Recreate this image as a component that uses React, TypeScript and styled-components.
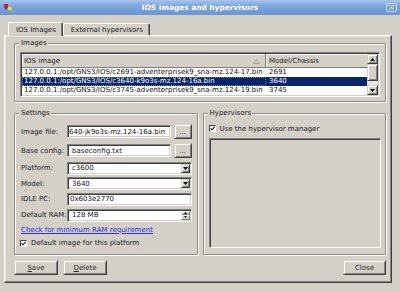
import React from "react";
import styled, { createGlobalStyle } from "styled-components";

const Face = "#d4d0c8";
const Shadow = "#808080";
const DarkShadow = "#404040";
const Highlight = "#ffffff";

const GlobalStyle = createGlobalStyle`
  html, body {
    margin: 0;
    padding: 0;
    background: ${Face};
  }

  body {
    font-family: "DejaVu Sans", Verdana, sans-serif;
    font-size: 7px;
    color: #1c1c1c;
  }

  * {
    box-sizing: border-box;
  }
`;

interface IImage {
  path: string;
  model: string;
  selected?: boolean;
}

const images: IImage[] = [
  { path: "127.0.0.1:/opt/GNS3/IOS/c2691-adventerprisek9_sna-mz.124-17.bin", model: "2691" },
  { path: "127.0.0.1:/opt/GNS3/IOS/c3640-k9o3s-mz.124-16a.bin", model: "3640", selected: true },
  { path: "127.0.0.1:/opt/GNS3/IOS/c3745-adventerprisek9_sna-mz.124-19.bin", model: "3745" },
  { path: "127.0.0.1:/opt/GNS3/IOS/c7200-adventerprisek9-mz.124-17.bin", model: "7200" },
];

const Check = () => (
  <svg width="5" height="5" viewBox="0 0 5 5">
    <path d="M0.5 2.3 L2 3.8 L4.6 0.8" fill="none" stroke="#111" strokeWidth="1.1" />
  </svg>
);

const Arrow = ({ up }: { up?: boolean }) => (
  <svg width="5" height="3" viewBox="0 0 5 3">
    <path d={up ? "M0 3 L2.5 0 L5 3 Z" : "M0 0 L5 0 L2.5 3 Z"} fill="#111" />
  </svg>
);

export default function App() {
  return (
    <>
      <GlobalStyle />
      <Window>
        <TitleBar>
          <svg width="10" height="9" viewBox="0 0 10 9">
            <rect x="1" y="1" width="4" height="4" fill="#d42020" />
            <rect x="2" y="4.5" width="2" height="2" fill="#2a3cc8" />
            <circle cx="6.8" cy="5.6" r="2" fill="#f2e21c" />
          </svg>
          <Title>IOS images and hypervisors</Title>
          <CloseBox>
            <svg width="5" height="5" viewBox="0 0 5 5">
              <path d="M0.5 0.5 L4.5 4.5 M4.5 0.5 L0.5 4.5" stroke="#fff" strokeWidth="1" />
            </svg>
          </CloseBox>
        </TitleBar>

        <Body>
          <TabBar>
            <Tab $active>IOS Images</Tab>
            <Tab>External hypervisors</Tab>
          </TabBar>

          <Pane>
            <Group>
              <GroupTitle>Images</GroupTitle>
              <Table>
                <List>
                  <HeaderRow>
                    <HeaderCell>
                      IOS image
                      <SortMark width="7" height="5" viewBox="0 0 7 5">
                        <path d="M0.5 4.5 L3.5 0.5 L6.5 4.5 Z" fill="none" stroke="#a4a19b" />
                      </SortMark>
                    </HeaderCell>
                    <HeaderCell>Model/Chassis</HeaderCell>
                  </HeaderRow>
                  {images.map((image) => (
                    <Row key={image.path} $selected={image.selected}>
                      <Cell $focus={image.selected}>{image.path}</Cell>
                      <Cell>{image.model}</Cell>
                    </Row>
                  ))}
                </List>
                <ScrollBar>
                  <ScrollButton>
                    <Arrow up />
                  </ScrollButton>
                  <Thumb />
                  <ScrollTrack />
                  <ScrollButton>
                    <Arrow />
                  </ScrollButton>
                </ScrollBar>
              </Table>
            </Group>

            <Columns>
              <Group>
                <GroupTitle>Settings</GroupTitle>
                <FormRow $height={19}>
                  <Label>Image file:</Label>
                  <Field $pad={1}>640-jk9o3s-mz.124-16a.bin</Field>
                  <SmallButton>...</SmallButton>
                </FormRow>
                <FormRow $height={19}>
                  <Label>Base config:</Label>
                  <Field>baseconfig.txt</Field>
                  <SmallButton>...</SmallButton>
                </FormRow>
                <FormRow $height={16}>
                  <Label>Platform:</Label>
                  <Field>
                    <FieldText>c3600</FieldText>
                    <DropButton>
                      <Arrow />
                    </DropButton>
                  </Field>
                </FormRow>
                <FormRow $height={15}>
                  <Label>Model:</Label>
                  <Field>
                    <FieldText>3640</FieldText>
                    <DropButton>
                      <Arrow />
                    </DropButton>
                  </Field>
                </FormRow>
                <FormRow $height={16}>
                  <Label>IDLE PC:</Label>
                  <Field $pad={2}>0x603e2770</Field>
                </FormRow>
                <FormRow $height={16}>
                  <Label>Default RAM:</Label>
                  <Field>
                    <FieldText>128 MB</FieldText>
                    <Spin>
                      <SpinHalf>
                        <Arrow up />
                      </SpinHalf>
                      <SpinHalf>
                        <Arrow />
                      </SpinHalf>
                    </Spin>
                  </Field>
                </FormRow>
                <FormRow $height={13}>
                  <Link>Check for minimum RAM requirement</Link>
                </FormRow>
                <FormRow $height={14}>
                  <CheckLine>
                    <CheckBox>
                      <Check />
                    </CheckBox>
                    Default image for this platform
                  </CheckLine>
                </FormRow>
              </Group>

              <HyperGroup>
                <GroupTitle>Hypervisors</GroupTitle>
                <CheckLine $height={15}>
                  <CheckBox>
                    <Check />
                  </CheckBox>
                  Use the hypervisor manager
                </CheckLine>
                <HyperList />
              </HyperGroup>
            </Columns>

            <ButtonRow>
              <PushButton>
                <u>S</u>ave
              </PushButton>
              <PushButton>
                <u>D</u>elete
              </PushButton>
              <PushButton $right>Close</PushButton>
            </ButtonRow>
          </Pane>
        </Body>
      </Window>
    </>
  );
}

const Window = styled.div`
  width: 400px;
  height: 292px;

  display: flex;
  flex-direction: column;

  overflow: hidden;

  background: ${Face};
`;

const TitleBar = styled.div`
  flex: none;
  height: 15px;

  display: grid;
  grid-template-columns: 1fr auto 1fr;
  align-items: center;

  padding: 0 3px 0 3px;

  background: linear-gradient(#a9c6ec, #7fa6dd 40%, #6c97d5);
  border-bottom: 1px solid #7096cc;
`;

const Title = styled.div`
  color: #ffffff;

  font-size: 7.4px;
  font-weight: bold;

  white-space: nowrap;
`;

const CloseBox = styled.div`
  justify-self: end;

  width: 11px;
  height: 9px;

  display: flex;
  align-items: center;
  justify-content: center;

  border: 1px solid #c4d6f0;
  border-radius: 2px;

  background: linear-gradient(#8db0e2, #6e98d4);
`;

const Body = styled.div`
  flex: 1;

  display: flex;
  flex-direction: column;

  padding: 6px 8px 9px 4px;
`;

const TabBar = styled.div`
  height: 14px;

  display: flex;
  align-items: flex-end;

  padding-left: 4px;
`;

const Tab = styled.div<{ $active?: boolean }>`
  position: relative;
  z-index: 1;

  height: ${(p) => (p.$active ? 14 : 12)}px;
  margin-bottom: ${(p) => (p.$active ? -1 : 0)}px;
  padding: 0 6px 0 7px;

  display: flex;
  align-items: center;

  border: 1px solid;
  border-color: ${Highlight} ${DarkShadow} transparent ${Highlight};
  border-bottom: none;
  border-radius: 2px 2px 0 0;

  box-shadow: inset -1px 0 0 ${Shadow};

  background: ${Face};

  white-space: nowrap;
`;

const Pane = styled.div`
  flex: 1;

  display: flex;
  flex-direction: column;

  padding: 7px 5px 5px 9px;

  border: 1px solid;
  border-color: ${Highlight} ${DarkShadow} ${DarkShadow} ${Highlight};

  box-shadow: inset -1px -1px 0 ${Shadow}, inset 1px 1px 0 #e6e3dc;
`;

const Group = styled.div`
  position: relative;
  min-width: 0;

  display: flex;
  flex-direction: column;

  padding: 7px 4px 4px 5px;

  border: 1px solid #8e8b85;
  border-radius: 1px;

  box-shadow: 1px 1px 0 ${Highlight}, inset 1px 1px 0 ${Highlight};

  &:first-child {
    padding: 8px 5px 4px 5px;
  }
`;

const GroupTitle = styled.div`
  position: absolute;
  top: -5px;
  left: 4px;

  padding: 0 1px 0 2px;

  background: ${Face};

  line-height: 9px;
`;

const Table = styled.div`
  height: 45px;

  display: grid;
  grid-template-columns: 1fr 11px;

  overflow: hidden;

  border: 1px solid;
  border-color: ${Shadow} ${Highlight} ${Highlight} ${Shadow};

  box-shadow: inset 1px 1px 0 ${DarkShadow}, inset -1px -1px 0 ${Face};

  padding: 1px;

  background: #ffffff;
`;

const List = styled.div`
  overflow: hidden;
`;

const columns = "244px 1fr";

const HeaderRow = styled.div`
  height: 14px;

  display: grid;
  grid-template-columns: ${columns};
`;

const HeaderCell = styled.div`
  position: relative;

  display: flex;
  align-items: center;

  padding-left: 2px;

  border-right: 1px solid ${Shadow};
  border-bottom: 1px solid ${Shadow};

  box-shadow: inset 1px 1px 0 ${Highlight};

  background: ${Face};

  &:last-child {
    padding-left: 3px;
    border-right: none;
  }
`;

const SortMark = styled.svg`
  position: absolute;
  top: 5px;
  right: 5px;
`;

const Row = styled.div<{ $selected?: boolean }>`
  height: 9px;

  display: grid;
  grid-template-columns: ${columns};

  background: ${(p) => (p.$selected ? "#0a246a" : "#ffffff")};
  color: ${(p) => (p.$selected ? "#ffffff" : "#111111")};
`;

const Cell = styled.div<{ $focus?: boolean }>`
  padding-left: 2px;

  line-height: 9px;

  white-space: nowrap;
  overflow: hidden;

  outline: ${(p) => (p.$focus ? "1px dotted #6f7ca6" : "none")};
  outline-offset: -1px;

  &:last-child {
    padding-left: 3px;
  }
`;

const ScrollBar = styled.div`
  display: flex;
  flex-direction: column;

  background: #ece9e3;
`;

const raised = `
  border: 1px solid;
  border-color: ${Face} ${DarkShadow} ${DarkShadow} ${Face};
  box-shadow: inset 1px 1px 0 ${Highlight}, inset -1px -1px 0 ${Shadow};
  background: ${Face};
`;

const ScrollButton = styled.div`
  height: 10px;

  display: flex;
  align-items: center;
  justify-content: center;

  ${raised}
`;

const Thumb = styled.div`
  height: 17px;

  ${raised}
`;

const ScrollTrack = styled.div`
  flex: 1;
`;

const Columns = styled.div`
  display: grid;
  grid-template-columns: minmax(0, 1fr) minmax(0, 1fr);
  gap: 5px;

  margin-top: 11px;
`;

const FormRow = styled.div<{ $height: number }>`
  height: ${(p) => p.$height}px;
  min-width: 0;

  display: flex;
  align-items: center;
  gap: 3px;
`;

const Label = styled.div`
  flex: none;
  width: 44px;

  padding-left: 1px;

  white-space: nowrap;
`;

const sunken = `
  border: 1px solid;
  border-color: ${Shadow} ${Highlight} ${Highlight} ${Shadow};
  box-shadow: inset 1px 1px 0 ${DarkShadow}, inset -1px -1px 0 ${Face};
`;

const Field = styled.div<{ $pad?: number }>`
  flex: 1;
  min-width: 0;
  height: 13px;

  display: flex;
  align-items: center;

  padding: 0 2px 0 ${(p) => p.$pad ?? 4}px;

  ${sunken}

  background: #ffffff;
  color: #111111;

  white-space: nowrap;
  overflow: hidden;
`;

const FieldText = styled.div`
  flex: 1;
`;

const SmallButton = styled.div`
  flex: none;
  width: 18px;
  height: 15px;

  display: flex;
  align-items: center;
  justify-content: center;

  ${raised}

  color: #333333;
`;

const DropButton = styled.div`
  flex: none;
  width: 9px;
  height: 9px;
  margin-right: -1px;

  display: flex;
  align-items: center;
  justify-content: center;

  ${raised}
`;

const Spin = styled.div`
  flex: none;
  width: 9px;
  height: 9px;
  margin-right: -1px;

  display: flex;
  flex-direction: column;
`;

const SpinHalf = styled.div`
  flex: 1;

  display: flex;
  align-items: center;
  justify-content: center;

  border: 1px solid;
  border-color: ${Highlight} ${Shadow} ${Shadow} ${Highlight};

  background: ${Face};

  svg {
    width: 3px;
    height: 2px;
  }
`;

const Link = styled.a`
  padding-left: 1px;

  color: #2a2ad6;
  text-decoration: underline;

  white-space: nowrap;
`;

const CheckLine = styled.div<{ $height?: number }>`
  height: ${(p) => (p.$height ? `${p.$height}px` : "auto")};

  display: flex;
  align-items: center;
  gap: 4px;

  white-space: nowrap;
`;

const CheckBox = styled.span`
  width: 7px;
  height: 7px;

  display: flex;
  align-items: center;
  justify-content: center;

  border: 1px solid;
  border-color: ${DarkShadow} ${Highlight} ${Highlight} ${DarkShadow};

  background: #ffffff;
`;

const HyperGroup = styled(Group)`
  padding: 7px 4px 6px 5px;
  gap: 2px;
`;

const HyperList = styled.div`
  flex: 1;

  ${sunken}

  background: ${Face};
`;

const ButtonRow = styled.div`
  height: 15px;

  display: flex;
  gap: 5px;

  margin-top: 5px;
`;

const PushButton = styled.div<{ $right?: boolean }>`
  width: ${(p) => (p.$right ? 43 : 44)}px;

  display: flex;
  align-items: center;
  justify-content: center;

  margin-left: ${(p) => (p.$right ? "auto" : "0")};

  ${raised}

  color: #2e2e2e;
`;
